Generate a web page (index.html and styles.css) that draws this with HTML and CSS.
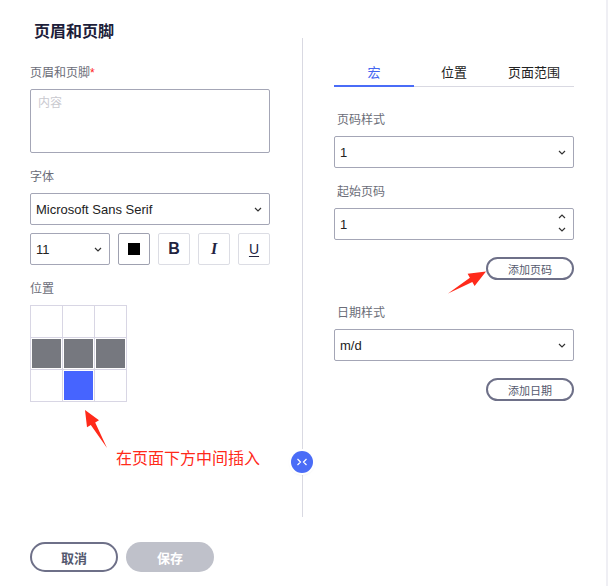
FILE: index.html
```html
<!DOCTYPE HTML>
<html>
<head>
<meta charset="utf-8" />
<title>页眉和页脚</title>
<link rel="stylesheet" href="styles.css">
</head>

<body>
<div class="dialog">
	<h2 class="title">页眉和页脚</h2>
	<div class="main">
		<div class="left">
			<div class="field">
				<label class="label">页眉和页脚<em>*</em></label>
				<div class="textarea">内容</div>
			</div>
			<div class="field">
				<label class="label">字体</label>
				<div class="select">Microsoft Sans Serif<svg class="caret" width="8" height="5" viewBox="0 0 8 5"><path d="M1 1l3 3 3-3" fill="none" stroke="#333" stroke-width="1.2"/></svg></div>
				<div class="tools">
					<div class="select size">11<svg class="caret" width="8" height="5" viewBox="0 0 8 5"><path d="M1 1l3 3 3-3" fill="none" stroke="#333" stroke-width="1.2"/></svg></div>
					<div class="tool color"><span class="swatch"></span></div>
					<div class="tool bold">B</div>
					<div class="tool italic">I</div>
					<div class="tool under">U</div>
				</div>
			</div>
			<div class="field">
				<label class="label">位置</label>
				<div class="pos">
					<div class="cell"></div><div class="cell"></div><div class="cell"></div>
					<div class="cell on"></div><div class="cell on"></div><div class="cell on"></div>
					<div class="cell"></div><div class="cell active"></div><div class="cell"></div>
				</div>
			</div>
		</div>
		<div class="divider">
			<span class="toggle"><svg width="12" height="8" viewBox="0 0 12 8"><path d="M1.5 1l3 3-3 3M10.5 1l-3 3 3 3" fill="none" stroke="#fff" stroke-width="1.2"/></svg></span>
		</div>
		<div class="right">
			<div class="tabs">
				<span class="tab active">宏</span>
				<span class="tab">位置</span>
				<span class="tab">页面范围</span>
			</div>
			<div class="field">
				<label class="label">页码样式</label>
				<div class="select">1<svg class="caret" width="8" height="5" viewBox="0 0 8 5"><path d="M1 1l3 3 3-3" fill="none" stroke="#333" stroke-width="1.2"/></svg></div>
			</div>
			<div class="field with-action">
				<label class="label">起始页码</label>
				<div class="select">1<span class="stepper"><svg width="8" height="5" viewBox="0 0 8 5"><path d="M1 4l3-3 3 3" fill="none" stroke="#333" stroke-width="1.2"/></svg><svg width="8" height="5" viewBox="0 0 8 5"><path d="M1 1l3 3 3-3" fill="none" stroke="#333" stroke-width="1.2"/></svg></span></div>
				<div class="actions"><button class="pill">添加页码</button></div>
			</div>
			<div class="field with-action">
				<label class="label">日期样式</label>
				<div class="select">m/d<svg class="caret" width="8" height="5" viewBox="0 0 8 5"><path d="M1 1l3 3 3-3" fill="none" stroke="#333" stroke-width="1.2"/></svg></div>
				<div class="actions"><button class="pill">添加日期</button></div>
			</div>
		</div>
	</div>
	<div class="footer">
		<button class="btn cancel">取消</button>
		<button class="btn save">保存</button>
	</div>

	<!-- 标注 -->
	<svg class="marks" width="608" height="586" viewBox="0 0 608 586">
		<polygon points="85,410 99,420.3 95.2,422.5 107,448 90.8,425.1 87,427.3" fill="#ff2a1a"/>
		<polygon points="486,271.5 474.6,286 472.3,282.1 448,293.5 469.9,277.7 467.6,273.8" fill="#ff2a1a"/>
	</svg>
	<div class="note">在页面下方中间插入</div>
</div>
</body>
</html>
```

FILE: styles.css
```css
body { margin: 0; background: #efeff4; font-family: "Liberation Sans", "Noto Sans CJK SC", sans-serif; }
.dialog { position: relative; width: 606px; height: 586px; background: #fff; }
.title { margin: 0; padding: 22px 0 0 34px; height: 16px; line-height: 20px; font-size: 16px; font-weight: bold; color: #1d1e3a; }

.main { display: flex; height: 479px; }
.left, .right { width: 240px; }
.left { margin-left: 30px; padding-top: 27px; }
.right { padding-top: 21px; }
	.right .label { padding-left: 3px; }

.divider { position: relative; width: 1px; background: #d9d9e2; margin: 0 31px 0 32px; }
	.divider .toggle {
		position: absolute; left: -11px; top: 413px;
		width: 22px; height: 22px; border-radius: 50%;
		background: #4a6cf7; box-shadow: 0 0 0 2px #fff, 0 1px 3px rgba(0,0,0,.2);
		display: flex; align-items: center; justify-content: center;
	}

.field { margin-bottom: 16px; }
.field.with-action { margin-bottom: 25px; }
.label { display: block; font-size: 12px; line-height: 16px; color: #6b6d78; margin-bottom: 8px; }
	.label em { font-style: normal; color: #f22; }

.textarea { border: 1px solid #a4a6b6; border-radius: 2px; padding: 5px 7px; box-sizing: border-box; height: 64px; font-size: 12px; color: #c9c9cf; line-height: 16px; }

.select {
	position: relative; height: 32px; box-sizing: border-box;
	border: 1px solid #a4a6b6; border-radius: 2px;
	padding: 0 20px 0 5px; display: flex; align-items: center;
	font-size: 13px; color: #222;
}
	.select .caret { position: absolute; right: 7px; top: 13px; }
	.select .stepper { position: absolute; right: 7px; top: 5px; display: flex; flex-direction: column; gap: 8px; }

.tools { display: flex; gap: 8px; margin-top: 8px; }
	.tools .size { width: 80px; }
	.tool {
		width: 32px; height: 32px; box-sizing: border-box;
		border: 1px solid #dcdde4; border-radius: 2px;
		display: flex; align-items: center; justify-content: center;
		color: #22243f; font-size: 15px;
	}
	.tool.color { border-color: #9fa1b0; }
		.tool .swatch { width: 12px; height: 12px; background: #000; }
	.tool.bold { font-weight: bold; font-size: 16px; }
	.tool.italic { font-style: italic; font-family: "Liberation Serif", serif; font-weight: bold; font-size: 16px; }
	.tool.under { text-decoration: underline; text-underline-offset: 2px; font-size: 14px; }

.pos { display: grid; grid-template-columns: repeat(3, 31px); grid-auto-rows: 31px; gap: 1px; padding: 1px; width: 97px; box-sizing: border-box; background: #d8d6e4; }
	.pos .cell { background: #fff; }
	.pos .cell.on { background: #76787f; box-shadow: inset 0 0 0 1px #fff; }
	.pos .cell.active { background: #4664ff; box-shadow: inset 0 0 0 1px #fff; }

.tabs { display: flex; border-bottom: 1px solid #d9d9e2; margin-bottom: 25px; }
	.tab { flex: 1; text-align: center; font-size: 13px; line-height: 24px; padding-top: 2px; color: #222; border-bottom: 2px solid transparent; margin-bottom: -1px; }
	.tab.active { color: #4566f0; border-color: #4a6cf7; }

.actions { display: flex; justify-content: flex-end; margin-top: 17px; }
.pill {
	width: 88px; height: 23px; border: 2px solid #6e7088; border-radius: 12px;
	background: #fff; font-family: inherit; font-size: 11px; color: #555a6e; padding: 0;
}

.footer { display: flex; gap: 8px; padding: 25px 0 0 30px; }
.btn { width: 88px; height: 30px; border-radius: 15px; font-family: inherit; font-size: 13px; font-weight: bold; padding: 0; }
.btn.cancel { background: #fff; border: 2px solid #6e7088; color: #555a70; }
.btn.save { background: #bfc1ca; border: 0; color: #fff; }

.marks { position: absolute; left: 0; top: 0; pointer-events: none; }
.note { position: absolute; left: 116px; top: 449px; font-size: 16px; line-height: 20px; color: #ff2a1a; }
```
